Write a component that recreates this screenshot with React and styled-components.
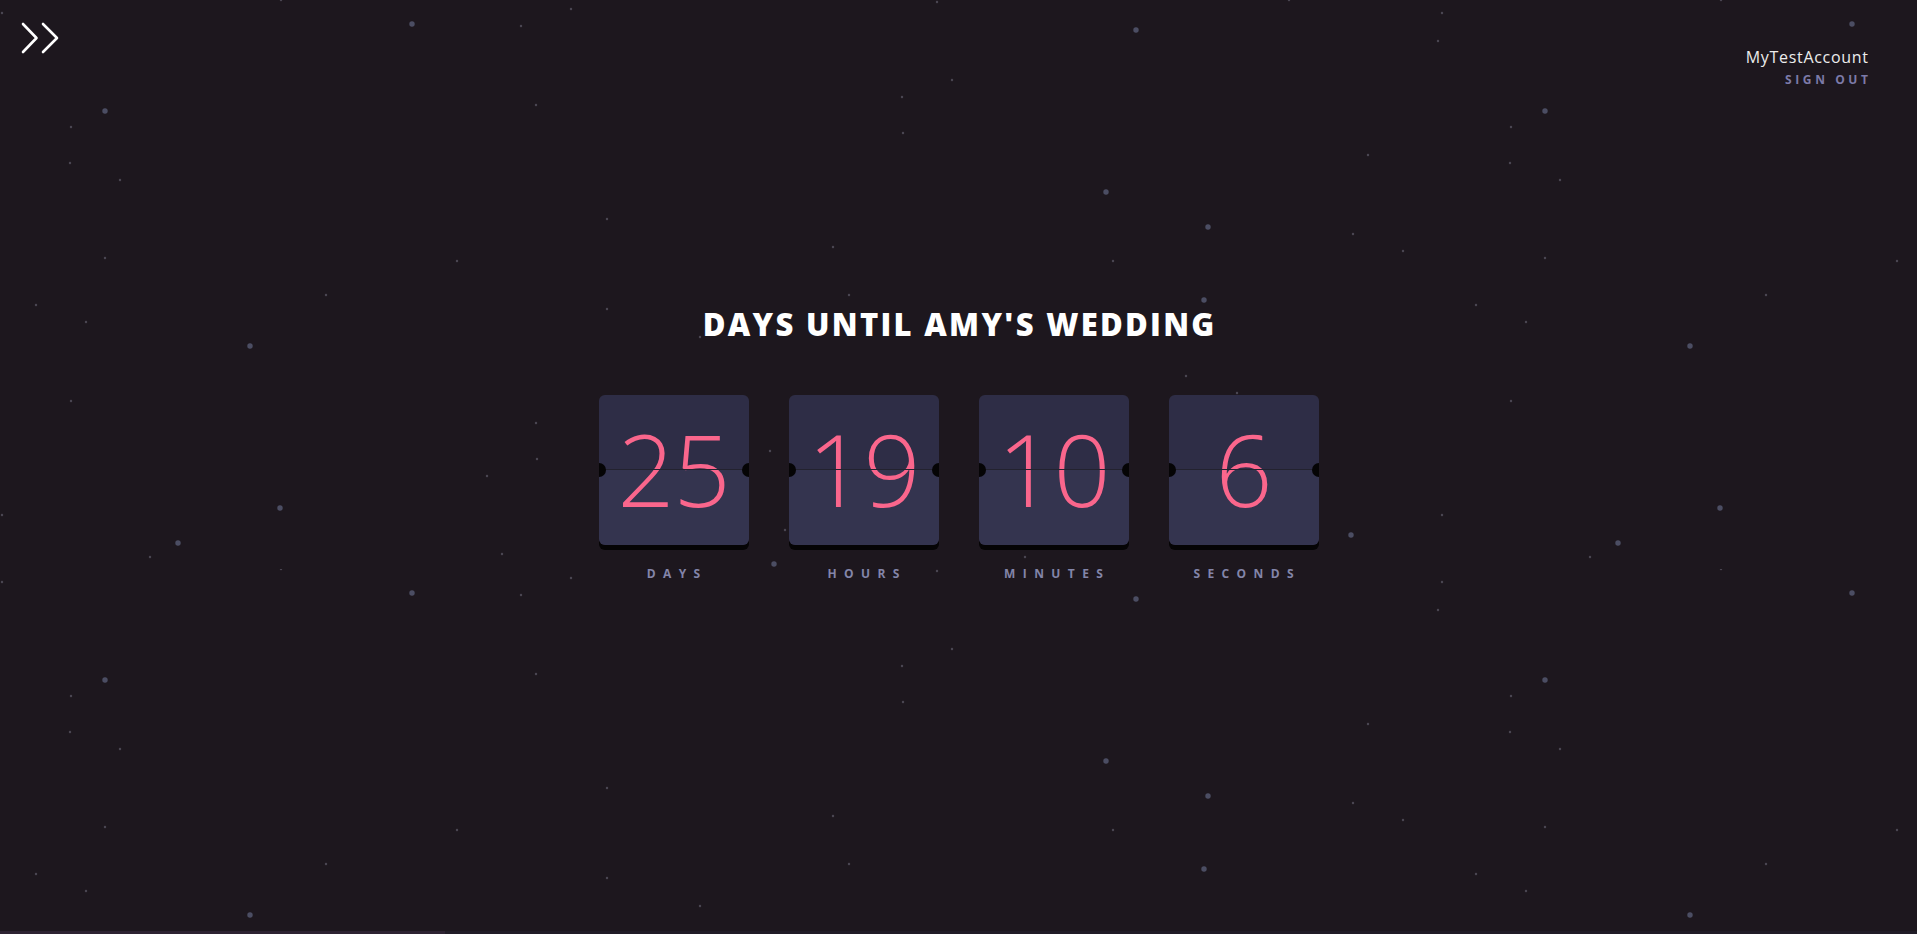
import styled, { createGlobalStyle } from "styled-components"

const GlobalStyle = createGlobalStyle`
  html, body {
    margin: 0;
    padding: 0;
    background: #1d171e;
  }
  * {
    box-sizing: border-box;
  }
`

const Page = styled.div`
  position: relative;
  min-height: 100vh;
  display: flex;
  flex-direction: column;
  background: #1d171e;
  overflow: hidden;
  font-family: "Open Sans", "Liberation Sans", sans-serif;
`

const Stars = styled.svg`
  position: absolute;
  inset: 0;
  width: 100%;
  height: 100%;
  z-index: 0;
  pointer-events: none;
`

const Header = styled.header`
  position: relative;
  z-index: 1;
  height: 100px;
  display: flex;
  justify-content: space-between;
  align-items: flex-start;
  padding: 21px 49px 0 20px;
`

const MenuButton = styled.button`
  background: none;
  border: none;
  padding: 0;
  cursor: pointer;
  display: flex;
`

const Account = styled.div`
  margin-top: 26px;
  display: flex;
  flex-direction: column;
  align-items: flex-end;
`

const UserName = styled.span`
  font-size: 16px;
  line-height: 20px;
  color: #ececec;
  letter-spacing: 0.7px;
  margin-right: -0.7px;
`

const SignOut = styled.a`
  margin-top: 6px;
  font-size: 12px;
  line-height: 14px;
  font-weight: 700;
  letter-spacing: 3.6px;
  margin-right: -3.6px;
  color: #7c7aa8;
  text-transform: uppercase;
  cursor: pointer;
`

const Main = styled.main`
  position: relative;
  z-index: 1;
  display: flex;
  flex-direction: column;
  align-items: center;
`

const Title = styled.h1`
  margin: 206px 0 0;
  font-size: 31px;
  line-height: 36px;
  font-weight: 800;
  letter-spacing: 2.3px;
  margin-right: -2.3px;
  color: #ffffff;
  text-transform: uppercase;
`

const Counter = styled.div`
  margin-top: 53px;
  display: flex;
  gap: 40px;
`

const Unit = styled.div`
  display: flex;
  flex-direction: column;
  align-items: center;
  width: 150px;
`

const Card = styled.div`
  position: relative;
  width: 150px;
  height: 150px;
  border-radius: 6px;
  overflow: hidden;
  background: linear-gradient(to bottom, #2e2d46 0, #2e2d46 50%, #34344f 50%, #34344f 100%);
  box-shadow: 0 5px 0 #050405;
  display: flex;
  align-items: center;
  justify-content: center;

  &::before {
    content: "";
    position: absolute;
    left: 0;
    right: 0;
    top: 74px;
    height: 1px;
    background: #23222f;
    z-index: 2;
  }
`

const Notch = styled.span`
  position: absolute;
  top: 68px;
  ${(p) => (p.$side === "left" ? "left: -7px;" : "right: -7px;")}
  width: 14px;
  height: 14px;
  border-radius: 50%;
  background: #050405;
  z-index: 3;
`

const Digits = styled.span`
  position: relative;
  z-index: 1;
  font-size: 100px;
  font-weight: 300;
  line-height: 1;
  color: #fa668c;
  letter-spacing: -1px;
  margin-top: -4px;
`

const Label = styled.span`
  margin-top: 21px;
  font-size: 12px;
  line-height: 16px;
  font-weight: 700;
  letter-spacing: 7.4px;
  margin-right: -7.4px;
  color: #8385a9;
  text-transform: uppercase;
`

const Footer = styled.div`
  position: relative;
  z-index: 1;
  margin-top: auto;
  height: 3px;
  display: flex;
  background: #211c27;
`

const FooterProgress = styled.div`
  width: 445px;
  background: #2d2232;
`

const bigStars = [
  [412, 24], [105, 111], [1136, 30], [1106, 192], [1208, 227], [250, 346],
  [280, 508], [178, 543], [1204, 300], [774, 564], [1351, 535],
]

const smallStars = [
  [2, 13], [281, 0], [571, 9], [521, 26], [71, 127], [70, 163], [120, 180],
  [536, 105], [607, 219], [105, 258], [457, 261], [937, 2], [1289, 0],
  [1438, 41], [952, 80], [902, 97], [903, 133], [1368, 155], [1353, 234],
  [1403, 251], [833, 247], [1113, 261], [36, 305], [86, 322], [326, 295],
  [71, 401], [607, 309], [536, 423], [537, 459], [487, 476], [2, 515],
  [150, 557], [502, 554], [700, 337], [849, 295], [1186, 376], [1237, 393],
  [770, 451], [785, 530], [1025, 557],
]

const units = [
  { value: 25, label: "Days" },
  { value: 19, label: "Hours" },
  { value: 10, label: "Minutes" },
  { value: 6, label: "Seconds" },
]

const StarField = () => (
  <Stars aria-hidden="true">
    <defs>
      <pattern id="stars" width="1440" height="569" patternUnits="userSpaceOnUse">
        {bigStars.map(([x, y]) => (
          <circle key={`b${x}-${y}`} cx={x} cy={y} r="2.7" fill="#4b4d63" />
        ))}
        {smallStars.map(([x, y]) => (
          <circle key={`s${x}-${y}`} cx={x} cy={y} r="1.2" fill="#4a4552" />
        ))}
      </pattern>
    </defs>
    <rect width="100%" height="100%" fill="url(#stars)" />
  </Stars>
)

const ChevronsIcon = () => (
  <svg width="40" height="34" viewBox="0 0 40 34" fill="none" stroke="#ffffff" strokeWidth="2.6" strokeLinecap="round" strokeLinejoin="round">
    <path d="M3 3 L16.5 17 L3 31" />
    <path d="M23 3 L37 17 L23 31" />
  </svg>
)

const App = () => {
  return (
    <Page>
      <GlobalStyle />
      <StarField />
      <Header>
        <MenuButton aria-label="Open menu">
          <ChevronsIcon />
        </MenuButton>
        <Account>
          <UserName>MyTestAccount</UserName>
          <SignOut>Sign out</SignOut>
        </Account>
      </Header>
      <Main>
        <Title>Days until Amy's wedding</Title>
        <Counter>
          {units.map((u) => (
            <Unit key={u.label}>
              <Card>
                <Notch $side="left" />
                <Digits>{u.value}</Digits>
                <Notch $side="right" />
              </Card>
              <Label>{u.label}</Label>
            </Unit>
          ))}
        </Counter>
      </Main>
      <Footer>
        <FooterProgress />
      </Footer>
    </Page>
  )
}

export default App
